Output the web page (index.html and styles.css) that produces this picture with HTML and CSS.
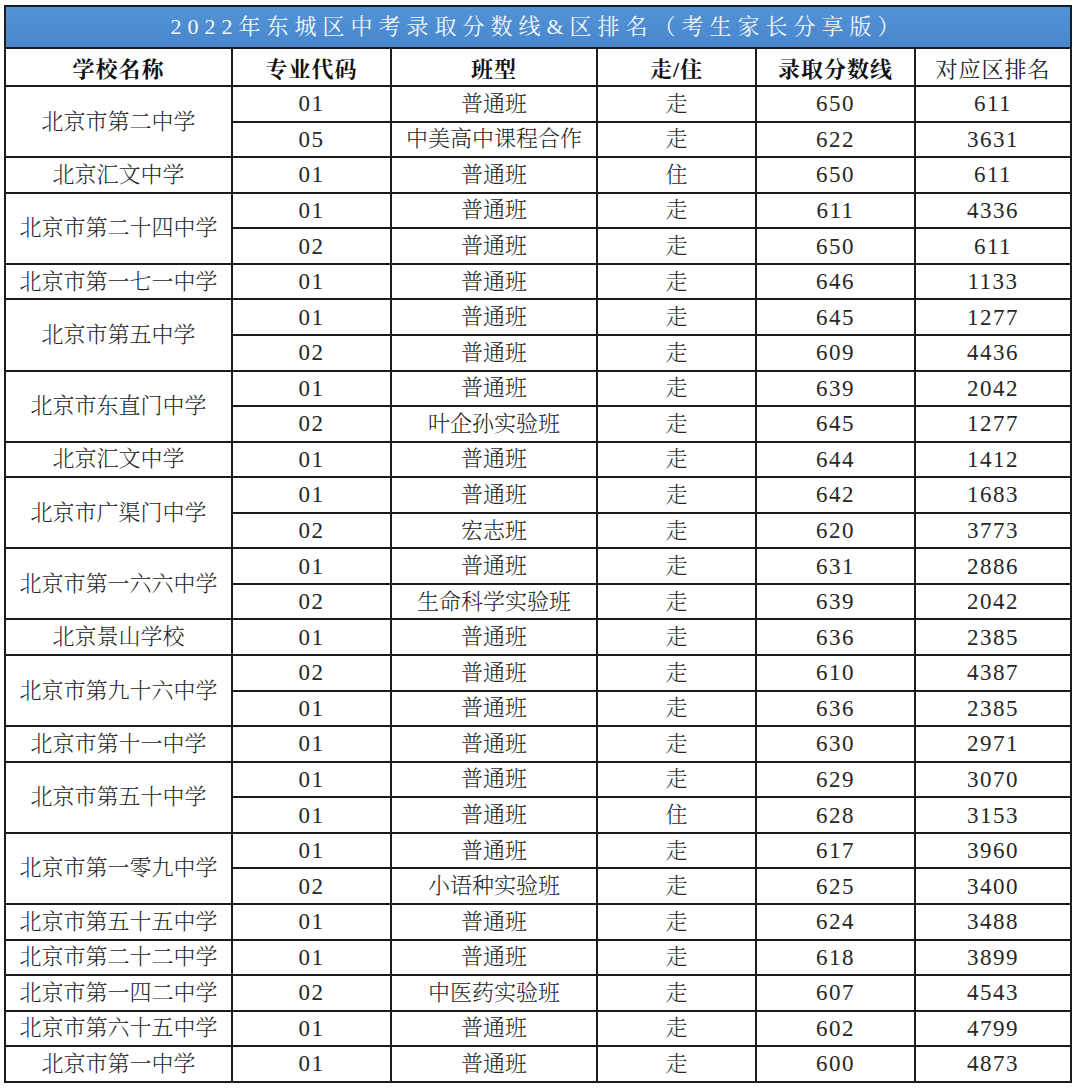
FILE: index.html
```html
<!DOCTYPE html>
<html lang="zh-CN">
<head>
<meta charset="utf-8">
<title>2022年东城区中考录取分数线&amp;区排名</title>
<link rel="stylesheet" href="styles.css">
</head>
<body>
<div class="sheet">
<table class="score-table">
<colgroup>
<col class="c-school"><col class="c-code"><col class="c-class"><col class="c-stay"><col class="c-score"><col class="c-rank">
</colgroup>
<thead>
<tr class="title-row"><th colspan="6" class="title">2022年东城区中考录取分数线&amp;区排名（考生家长分享版）</th></tr>
<tr class="head-row"><th>学校名称</th><th>专业代码</th><th>班型</th><th>走/住</th><th>录取分数线</th><th>对应区排名</th></tr>
</thead>
<tbody>
<tr><td rowspan="2">北京市第二中学</td><td class="n">01</td><td>普通班</td><td>走</td><td class="n">650</td><td class="n">611</td></tr>
<tr><td class="n">05</td><td>中美高中课程合作</td><td>走</td><td class="n">622</td><td class="n">3631</td></tr>
<tr><td>北京汇文中学</td><td class="n">01</td><td>普通班</td><td>住</td><td class="n">650</td><td class="n">611</td></tr>
<tr><td rowspan="2">北京市第二十四中学</td><td class="n">01</td><td>普通班</td><td>走</td><td class="n">611</td><td class="n">4336</td></tr>
<tr><td class="n">02</td><td>普通班</td><td>走</td><td class="n">650</td><td class="n">611</td></tr>
<tr><td>北京市第一七一中学</td><td class="n">01</td><td>普通班</td><td>走</td><td class="n">646</td><td class="n">1133</td></tr>
<tr><td rowspan="2">北京市第五中学</td><td class="n">01</td><td>普通班</td><td>走</td><td class="n">645</td><td class="n">1277</td></tr>
<tr><td class="n">02</td><td>普通班</td><td>走</td><td class="n">609</td><td class="n">4436</td></tr>
<tr><td rowspan="2">北京市东直门中学</td><td class="n">01</td><td>普通班</td><td>走</td><td class="n">639</td><td class="n">2042</td></tr>
<tr><td class="n">02</td><td>叶企孙实验班</td><td>走</td><td class="n">645</td><td class="n">1277</td></tr>
<tr><td>北京汇文中学</td><td class="n">01</td><td>普通班</td><td>走</td><td class="n">644</td><td class="n">1412</td></tr>
<tr><td rowspan="2">北京市广渠门中学</td><td class="n">01</td><td>普通班</td><td>走</td><td class="n">642</td><td class="n">1683</td></tr>
<tr><td class="n">02</td><td>宏志班</td><td>走</td><td class="n">620</td><td class="n">3773</td></tr>
<tr><td rowspan="2">北京市第一六六中学</td><td class="n">01</td><td>普通班</td><td>走</td><td class="n">631</td><td class="n">2886</td></tr>
<tr><td class="n">02</td><td>生命科学实验班</td><td>走</td><td class="n">639</td><td class="n">2042</td></tr>
<tr><td>北京景山学校</td><td class="n">01</td><td>普通班</td><td>走</td><td class="n">636</td><td class="n">2385</td></tr>
<tr><td rowspan="2">北京市第九十六中学</td><td class="n">02</td><td>普通班</td><td>走</td><td class="n">610</td><td class="n">4387</td></tr>
<tr><td class="n">01</td><td>普通班</td><td>走</td><td class="n">636</td><td class="n">2385</td></tr>
<tr><td>北京市第十一中学</td><td class="n">01</td><td>普通班</td><td>走</td><td class="n">630</td><td class="n">2971</td></tr>
<tr><td rowspan="2">北京市第五十中学</td><td class="n">01</td><td>普通班</td><td>走</td><td class="n">629</td><td class="n">3070</td></tr>
<tr><td class="n">01</td><td>普通班</td><td>住</td><td class="n">628</td><td class="n">3153</td></tr>
<tr><td rowspan="2">北京市第一零九中学</td><td class="n">01</td><td>普通班</td><td>走</td><td class="n">617</td><td class="n">3960</td></tr>
<tr><td class="n">02</td><td>小语种实验班</td><td>走</td><td class="n">625</td><td class="n">3400</td></tr>
<tr><td>北京市第五十五中学</td><td class="n">01</td><td>普通班</td><td>走</td><td class="n">624</td><td class="n">3488</td></tr>
<tr><td>北京市第二十二中学</td><td class="n">01</td><td>普通班</td><td>走</td><td class="n">618</td><td class="n">3899</td></tr>
<tr><td>北京市第一四二中学</td><td class="n">02</td><td>中医药实验班</td><td>走</td><td class="n">607</td><td class="n">4543</td></tr>
<tr><td>北京市第六十五中学</td><td class="n">01</td><td>普通班</td><td>走</td><td class="n">602</td><td class="n">4799</td></tr>
<tr><td>北京市第一中学</td><td class="n">01</td><td>普通班</td><td>走</td><td class="n">600</td><td class="n">4873</td></tr>
</tbody>
</table>
</div>
</body>
</html>
```
FILE: styles.css
```css
html, body {
  margin: 0;
  padding: 0;
  background: #ffffff;
}
body {
  width: 1080px;
  height: 1090px;
  overflow: hidden;
  font-family: "Liberation Serif", "Noto Serif CJK SC", "Noto Sans CJK SC", serif;
  color: #222;
}
.sheet {
  padding: 5px 0 0 4px;
}
.score-table {
  width: 1068px;
  table-layout: fixed;
  border-collapse: collapse;
  border: 2px solid #1c1c1c;
}
.c-school { width: 227px; }
.c-code { width: 159px; }
.c-class { width: 206px; }
.c-stay { width: 159px; }
.c-score { width: 159px; }
.c-rank { width: 156px; }

.score-table th,
.score-table td {
  border: 2px solid #1c1c1c;
  padding: 0;
  text-align: center;
  vertical-align: middle;
  white-space: nowrap;
  overflow: hidden;
}
.title-row { height: 42px; }
.title {
  background: linear-gradient(180deg, #5292d6 0%, #4987cc 100%);
  color: #f2f6fb;
  font-weight: normal;
  font-size: 22px;
  letter-spacing: 6px;
  line-height: 1;
  padding-top: 2px;
}
.head-row { height: 38px; }
.head-row th {
  font-size: 22px;
  font-weight: bold;
  color: #111;
  letter-spacing: 1px;
}
.head-row th:last-child {
  font-weight: normal;
  color: #222;
}
tbody tr { height: 35.57px; }
tbody td {
  font-size: 22px;
  font-weight: 300;
  color: #262626;
  line-height: 1;
}
tbody td.n {
  font-size: 23px;
  letter-spacing: 1.5px;
  font-weight: normal;
}
```
